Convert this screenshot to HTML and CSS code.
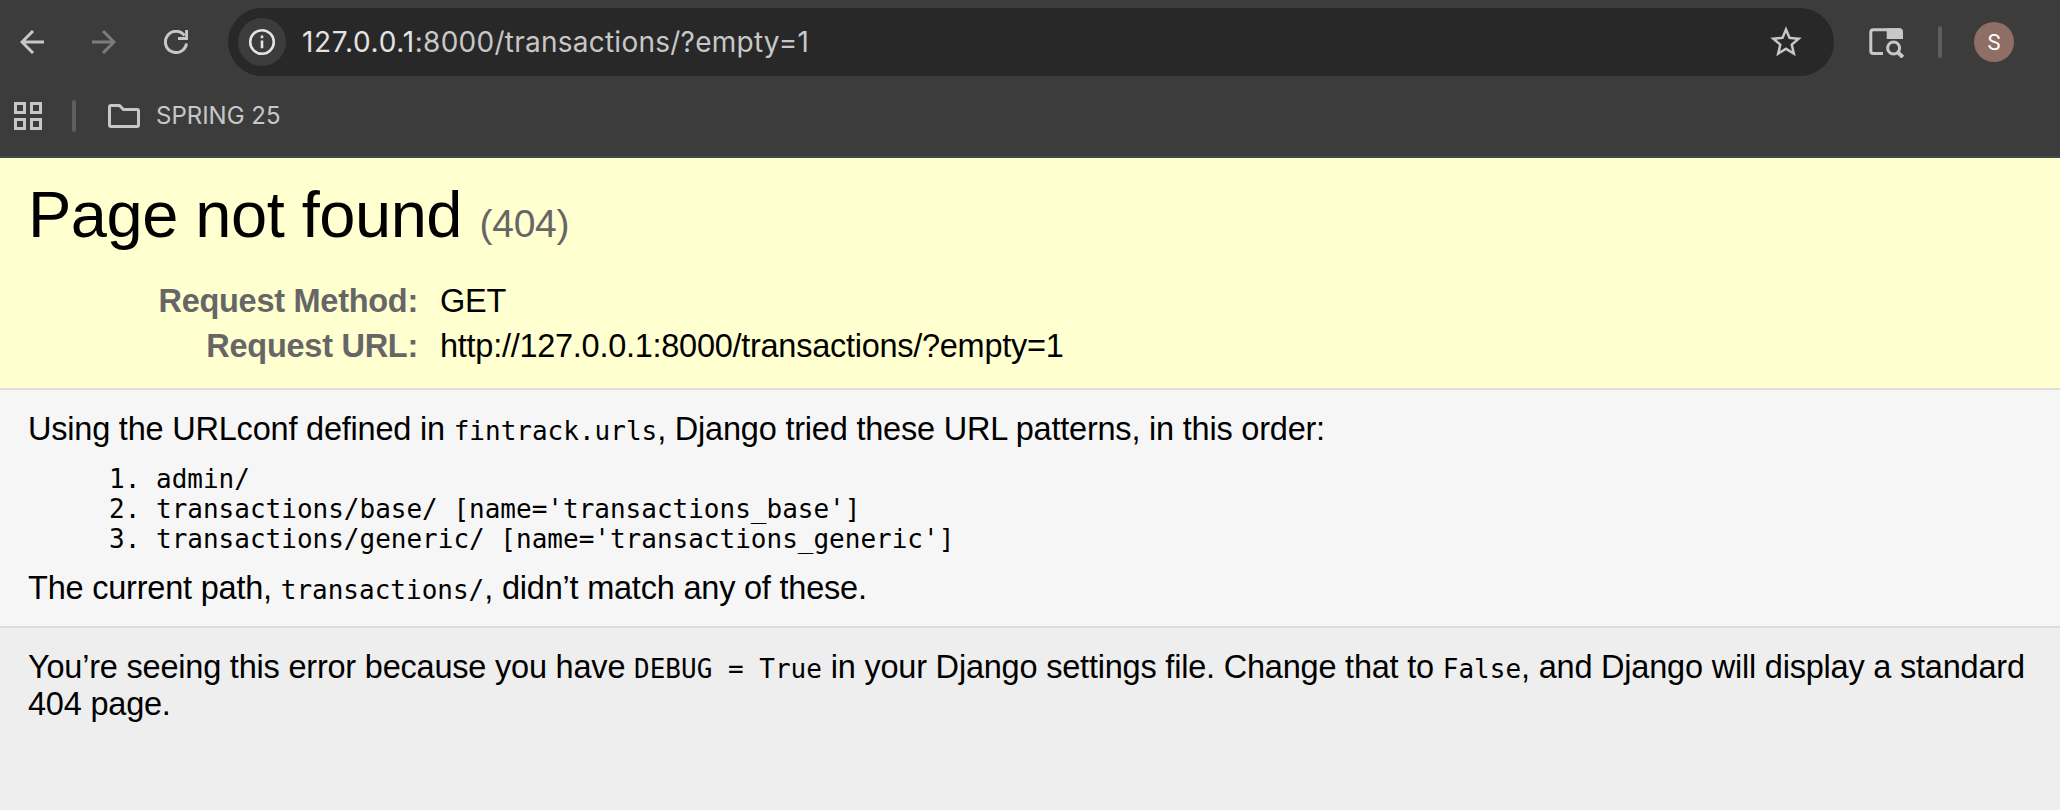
FILE: index.html
```html
<!DOCTYPE html>
<html lang="en">
<head>
<meta charset="utf-8">
<title>Page not found at /transactions/</title>
<link rel="stylesheet" href="styles.css">
</head>
<body>
<div class="chrome">
  <div class="toolbar">
    <svg class="icon back" width="24" height="24" viewBox="0 0 24 24"><path d="M24 12H2M13 1 2 12l11 11"/></svg>
    <svg class="icon forward" width="24" height="24" viewBox="0 0 24 24"><path d="M0 12h22M11 1l11 11-11 11"/></svg>
    <svg class="icon reload" width="24" height="24" viewBox="0 0 24 24"><path d="M22.5 13.5A10.6 10.6 0 1 1 20.5 5.6"/><path d="M22.6 0v8.6H14"/></svg>
    <div class="omnibox">
      <span class="site-info">
        <svg class="icon info" width="28" height="28" viewBox="0 0 28 28"><circle cx="14" cy="14" r="11.8"/><path d="M14 12.6v7.6M14 7.6v2.6"/></svg>
      </span>
      <span class="url"><span class="host">127.0.0.1</span>:8000/transactions/?empty=1</span>
      <svg class="star" width="32" height="32" viewBox="1.81 1.81 20.38 20.38"><path d="M22 9.24l-7.19-.62L12 2 9.190 8.630 2 9.240l5.460 4.730L5.820 21 12 17.270 18.180 21l-1.630-7.030zM12 15.400l-3.760 2.270 1-4.280-3.320-2.880 4.380-.38L12 6.100l1.710 4.040 4.380.38-3.320 2.880 1 4.280z"/></svg>
    </div>
    <svg class="icon panel" width="36" height="32" viewBox="0 0 36 32"><path class="frame" d="M15 27.500H5.300q-2.500 0-2.500-2.500V6.300q0-2.500 2.500-2.500H33"/><path class="tab" d="M18.700 2.300h12.800q3.500 0 3.500 3.500V13H18.700z"/><circle cx="25.600" cy="22" r="6"/><path class="handle" d="M29.800 26.200l5 5"/></svg>
    <span class="separator"></span>
    <span class="avatar">S</span>
  </div>
  <div class="bookmarks">
    <svg class="icon apps" width="28" height="28" viewBox="0 0 28 28"><path d="M1.500 1.500h9v9h-9zM17.500 1.500h9v9h-9zM1.500 17.500h9v9h-9zM17.500 17.500h9v9h-9z"/></svg>
    <span class="separator"></span>
    <svg class="icon folder" width="32" height="24" viewBox="0 0 32 24"><path d="M3 1.500h8.500l4 4H29q1.500 0 1.500 1.500v14q0 1.500-1.500 1.500H3q-1.500 0-1.500-1.500V3q0-1.500 1.500-1.500z"/></svg>
    <span class="folder-name">SPRING 25</span>
  </div>
</div>
<header class="summary">
  <h1>Page not found <small>(404)</small></h1>
  <dl class="meta">
    <dt>Request Method:</dt><dd>GET</dd>
    <dt>Request URL:</dt><dd>http://127.0.0.1:8000/transactions/?empty=1</dd>
  </dl>
</header>
<main class="patterns">
  <p>Using the URLconf defined in <code>fintrack.urls</code>, Django tried these URL patterns, in this order:</p>
  <ol>
    <li>admin/</li>
    <li>transactions/base/ [name='transactions_base']</li>
    <li>transactions/generic/ [name='transactions_generic']</li>
  </ol>
  <p>The current path, <code>transactions/</code>, didn’t match any of these.</p>
</main>
<footer class="explanation">
  <p>You’re seeing this error because you have <code>DEBUG = True</code> in your Django settings file. Change that to <code>False</code>, and Django will display a standard 404 page.</p>
</footer>
</body>
</html>
```
FILE: styles.css
```css
* { box-sizing: border-box; margin: 0; padding: 0; }
html, body { height: 100%; }
body {
  display: flex;
  flex-direction: column;
  background: #eee;
  color: #000;
  font: 32.5px/37px "Liberation Sans", Arial, sans-serif;
  letter-spacing: -0.21px;
  overflow: hidden;
}

/* Browser chrome */
.chrome {
  height: 158px;
  flex: none;
  padding-top: 8px;
  background: #3c3c3c;
  border-bottom: 2px solid #474747;
  font-family: Inter, sans-serif;
  letter-spacing: 0;
  color: #c7c7c7;
}
.toolbar { display: flex; align-items: center; height: 68px; padding-left: 20px; }
.icon { flex: none; fill: none; stroke: #c7c7c7; stroke-width: 3; }
.forward { margin-left: 48px; stroke: #7c7c7c; }
.reload { margin-left: 48px; }
.omnibox {
  display: flex;
  align-items: center;
  width: 1606px;
  height: 68px;
  margin-left: 40px;
  padding: 0 32px 0 10px;
  border-radius: 34px;
  background: #282828;
}
.site-info {
  display: flex;
  align-items: center;
  justify-content: center;
  width: 48px;
  height: 48px;
  border-radius: 50%;
  background: #3c3c3c;
}
.info { stroke: #e3e3e3; stroke-width: 2.6; }
.url { flex: 1; margin-left: 16px; font-size: 28px; line-height: 34px; letter-spacing: 0.25px; white-space: nowrap; }
.host { color: #e3e3e3; letter-spacing: 0.7px; }
.star { fill: #c7c7c7; }
.panel { margin-left: 34px; }
.panel .tab { fill: #c7c7c7; stroke: none; }
.panel .handle { stroke-width: 4; }
.separator { width: 4px; height: 32px; border-radius: 2px; background: #5e5e5e; }
.toolbar .separator { margin-left: 34px; }
.avatar {
  width: 40px;
  height: 40px;
  margin-left: 32px;
  border-radius: 50%;
  background: #8f6f65;
  color: #fff;
  font: 22px/41px Roboto, sans-serif;
  text-align: center;
}
.bookmarks { display: flex; align-items: center; height: 80px; padding-left: 14px; }
.bookmarks .separator { margin-left: 30px; }
.folder { margin-left: 32px; }
.folder-name { margin-left: 16px; font-size: 24px; line-height: 30px; }

/* Error page */
.summary { height: 232px; flex: none; padding: 19px 28px 0; background: #ffffcf; border-bottom: 2px solid #ddd; }
h1 { font-size: 65px; line-height: 76px; font-weight: normal; letter-spacing: -0.5px; }
small { font-size: 39px; line-height: 1; letter-spacing: -0.25px; color: #666; }
.meta { display: grid; grid-template-columns: 390px 1fr; column-gap: 22px; margin-top: 26px; line-height: 45px; letter-spacing: -0.27px; }
dt { color: #666; font-weight: bold; text-align: right; }
.patterns { height: 238px; flex: none; padding: 21px 28px 0; background: #f6f6f6; border-bottom: 2px solid #ddd; }
code, ol { font-family: "DejaVu Sans Mono", monospace; font-size: 26px; letter-spacing: 0; }
code { line-height: 1; }
ol { margin: 16px 0; padding-left: 128px; line-height: 30px; }
.explanation { flex: 1; padding: 21px 28px 0; background: #eee; }
```
